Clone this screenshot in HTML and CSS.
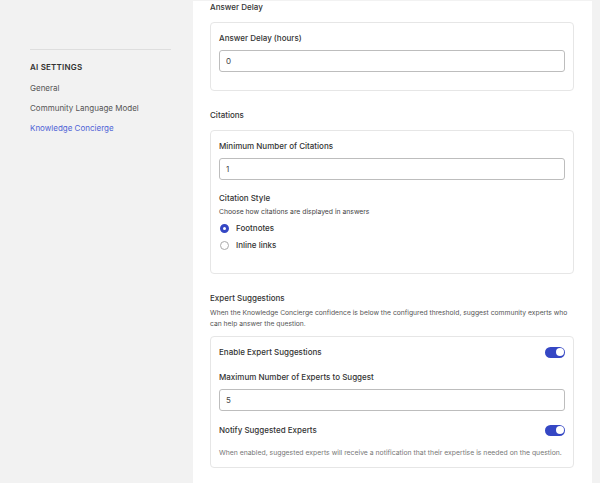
FILE: index.html
```html
<!DOCTYPE html>
<html lang="en">

<head>
    <meta charset="UTF-8" />
    <meta name="viewport" content="width=device-width, initial-scale=1.0" />
    <title>AI Settings - Knowledge Concierge</title>
    <link rel="stylesheet" href="styles.css">
</head>

<body>
    <div class="layout">
        <aside class="sidebar">
            <div class="sidebar-rule"></div>
            <h4 class="nav-title">AI SETTINGS</h4>
            <a class="nav-link" href="#">General</a>
            <a class="nav-link" href="#">Community Language Model</a>
            <a class="nav-link active" href="#">Knowledge Concierge</a>
        </aside>

        <main class="content">
            <section class="section first">
                <h3>Answer Delay</h3>
                <div class="card">
                    <label class="field-label" for="delay">Answer Delay (hours)</label>
                    <input type="text" id="delay" class="text-input" value="0" />
                </div>
            </section>

            <section class="section">
                <h3>Citations</h3>
                <div class="card">
                    <label class="field-label" for="minCitations">Minimum Number of Citations</label>
                    <input type="text" id="minCitations" class="text-input" value="1" />

                    <div class="field-label spaced">Citation Style</div>
                    <p class="hint">Choose how citations are displayed in answers</p>
                    <label class="radio-row"><span class="radio checked"></span> Footnotes</label>
                    <label class="radio-row"><span class="radio"></span> Inline links</label>
                </div>
            </section>

            <section class="section">
                <h3 class="tight">Expert Suggestions</h3>
                <p class="section-desc">When the Knowledge Concierge confidence is below the configured threshold, suggest community experts who can help answer the question.</p>
                <div class="card compact">
                    <div class="toggle-row">
                        <span class="field-label">Enable Expert Suggestions</span>
                        <span class="toggle on"></span>
                    </div>
                    <label class="field-label" for="maxExperts">Maximum Number of Experts to Suggest</label>
                    <input type="text" id="maxExperts" class="text-input" value="5" />
                    <div class="toggle-row notify">
                        <span class="field-label">Notify Suggested Experts</span>
                        <span class="toggle on"></span>
                    </div>
                    <p class="hint muted">When enabled, suggested experts will receive a notification that their expertise is needed on the question.</p>
                </div>
            </section>
        </main>
    </div>
</body>

</html>
```

FILE: styles.css
```css
body {
    margin: 0;
    font-family: Inter, "Noto Sans", sans-serif;
    background-color: #f2f2f2;
    color: #333;
    height: 483px;
    overflow: hidden;
}

.layout {
    display: flex;
    height: 100%;
}

.sidebar {
    width: 141px;
    padding: 49px 22px 0 30px;
    display: flex;
    flex-direction: column;
}

.sidebar-rule {
    border-top: 1px solid #dedede;
    margin-bottom: 11px;
}

.nav-title {
    margin: 0 0 9px;
    font-size: 8px;
    font-weight: 600;
    line-height: 12px;
    color: #333;
    letter-spacing: 0.2px;
}

.nav-link {
    font-size: 8px;
    color: #555;
    text-decoration: none;
    margin-bottom: 8px;
    line-height: 12px;
}

.nav-link.active {
    color: #4f63d6;
}

.content {
    width: 364px;
    background: white;
    padding: 0 18px 0 17px;
    margin-top: 1px;
}

.section {
    padding-top: 18px;
}

.section.first {
    padding-top: 0;
}

.section h3 {
    margin: 0 0 9px;
    font-size: 8px;
    font-weight: 500;
    color: #333;
    line-height: 12px;
}

.section h3.tight {
    margin-bottom: 3px;
}

.section-desc {
    margin: 0 0 7px;
    font-size: 6.75px;
    line-height: 11px;
    color: #555;
}

.card {
    border: 1px solid #e6e6e6;
    border-radius: 4px;
    padding: 9px 8px 18px 8px;
    display: flex;
    flex-direction: column;
}

.card.compact {
    padding-bottom: 9px;
}

.field-label {
    font-size: 8px;
    font-weight: 500;
    color: #333;
    line-height: 12px;
    margin-bottom: 6px;
}

.field-label.spaced {
    margin-top: 12px;
    margin-bottom: 3px;
}

.text-input {
    height: 22px;
    box-sizing: border-box;
    border: 1px solid #bdbdbd;
    border-radius: 3px;
    padding: 0 6px;
    font-family: inherit;
    font-size: 8px;
    color: #444;
}

.hint {
    margin: 0 0 5px;
    font-size: 6.8px;
    line-height: 10px;
    color: #444;
}

.hint.muted {
    font-size: 6.85px;
    color: #777;
    margin: 12px 0 0;
}

.radio-row {
    display: flex;
    align-items: center;
    gap: 7px;
    font-size: 8px;
    font-weight: 500;
    color: #333;
    line-height: 12px;
    margin: 0 0 5px 1px;
}

.radio-row:last-child {
    margin-bottom: 4px;
}

.radio {
    width: 7px;
    height: 7px;
    border: 1px solid #aaa;
    border-radius: 50%;
    box-sizing: content-box;
}

.radio.checked {
    width: 3px;
    height: 3px;
    border: 3px solid #3547c4;
    background: white;
}

.toggle-row {
    display: flex;
    justify-content: space-between;
    align-items: center;
    margin-bottom: 13px;
}

.toggle-row .field-label {
    margin-bottom: 0;
}

.toggle-row.notify {
    margin-top: 13px;
    margin-bottom: 0;
}

.toggle {
    width: 20px;
    height: 11px;
    border-radius: 6px;
    background: #3547c4;
    position: relative;
}

.toggle::after {
    content: "";
    position: absolute;
    top: 1.5px;
    right: 1.5px;
    width: 8px;
    height: 8px;
    border-radius: 50%;
    background: white;
}
```
